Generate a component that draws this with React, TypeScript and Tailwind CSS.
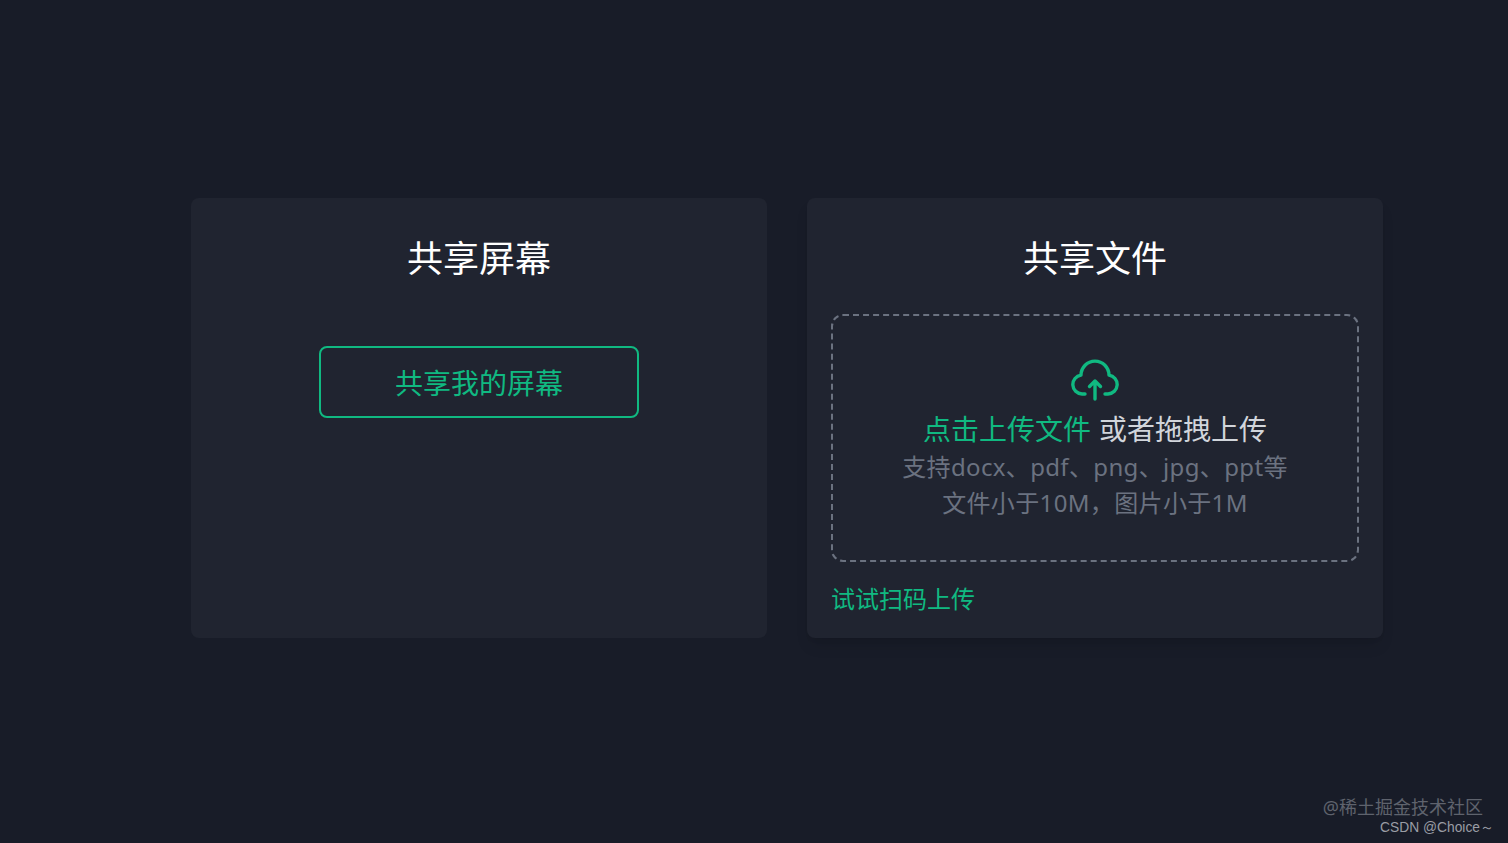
const fontStack = 'font-["Noto_Sans","Noto_Sans_CJK_SC",sans-serif]';

function CloudUploadIcon() {
  return (
    <svg width="48" height="44" viewBox="0 0 48 44" fill="none" stroke="#10b981" strokeWidth="3.4" strokeLinecap="round" strokeLinejoin="round">
      <path d="M14 37h-3a9.5 9.5 0 0 1-1-18.9A14 14 0 0 1 38 18.1a9.5 9.5 0 0 1-1 18.9h-3" />
      <path d="M24 42V24M18.5 29.5l5.5-5.5 5.5 5.5" />
    </svg>
  );
}

function ScreenCard() {
  return (
    <section className="flex h-[440px] w-[576px] flex-col items-center rounded-lg bg-[#202430] pt-[34px]">
      <h2 className="text-[36px] leading-[54px] text-white">共享屏幕</h2>
      <button className="mt-[60px] h-[72px] w-[320px] rounded-lg border-2 border-[#10b981] pt-[2px] text-[28px] text-[#10b981]">
        共享我的屏幕
      </button>
    </section>
  );
}

function FileCard() {
  return (
    <section className="flex h-[440px] w-[576px] flex-col items-center rounded-lg bg-[#202430] px-[24px] pt-[34px] shadow-lg">
      <h2 className="text-[36px] leading-[54px] text-white">共享文件</h2>
      <div className="mt-[28px] flex h-[248px] w-full flex-col items-center rounded-xl border-2 border-dashed border-[#6b7280] pt-[41px]">
        <CloudUploadIcon />
        <p className="mt-[8px] text-[28px] leading-[40px] text-[#d1d5db]">
          <span className="text-[#10b981]">点击上传文件</span>
          <span className="ml-[8px]">或者拖拽上传</span>
        </p>
        <p className="text-center text-[24px] leading-[36px] tracking-[0.35px] text-[#6b7280]">
          支持docx、pdf、png、jpg、ppt等
          <br />
          文件小于10M，图片小于1M
        </p>
      </div>
      <p className="mt-[19px] self-start text-[24px] leading-[36px] text-[#10b981]">试试扫码上传</p>
    </section>
  );
}

export default function App() {
  return (
    <main className={`relative h-[843px] w-full overflow-hidden bg-[#181c28] pl-[191px] pt-[198px] ${fontStack}`}>
      <div className="flex gap-[40px]">
        <ScreenCard />
        <FileCard />
      </div>
      <div className="absolute right-[25px] top-[795px] text-[18px] leading-[24px] text-[#5f636d]">@稀土掘金技术社区</div>
      <div className='absolute right-[14px] top-[820px] font-["Liberation_Sans"] text-[13.8px] leading-[16px] text-[#9a9da5]'>CSDN @Choice～</div>
    </main>
  );
}
